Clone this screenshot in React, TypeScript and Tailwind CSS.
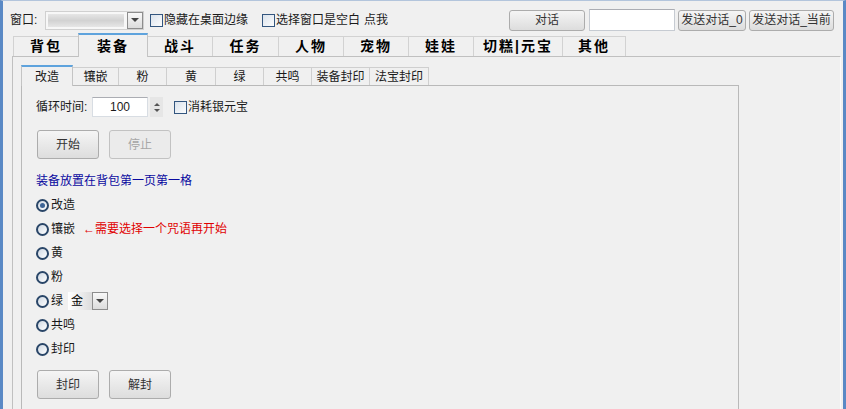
import React from 'react';

const FONT = "font-['Liberation_Sans','Noto_Sans_CJK_SC',sans-serif]";

const mainTabs = [
  { label: '背包', w: 'w-[66px]' },
  { label: '装备', w: 'w-[70px]', active: true },
  { label: '战斗', w: 'w-[66px]' },
  { label: '任务', w: 'w-[67px]' },
  { label: '人物', w: 'w-[66px]' },
  { label: '宠物', w: 'w-[66px]' },
  { label: '娃娃', w: 'w-[66px]' },
  { label: '切糕|元宝', w: 'w-[90px]' },
  { label: '其他', w: 'w-[64px]' },
];

const subTabs = [
  { label: '改造', w: 'w-[52px]', active: true },
  { label: '镶嵌', w: 'w-[47px]' },
  { label: '粉', w: 'w-[49px]' },
  { label: '黄', w: 'w-[50px]' },
  { label: '绿', w: 'w-[49px]' },
  { label: '共鸣', w: 'w-[49px]' },
  { label: '装备封印', w: 'w-[59px]' },
  { label: '法宝封印', w: 'w-[60px]' },
];

function Btn({ w, h, children, disabled }: { w: string; h: string; children: React.ReactNode; disabled?: boolean }) {
  return (
    <button
      className={`${w} ${h} shrink-0 flex items-center justify-center rounded-[3px] border text-[12px] leading-none ${
        disabled
          ? 'border-[#c2c2c2] text-[#a6a6a6] bg-[#ebebeb]'
          : 'border-[#acacac] text-[#333] bg-linear-to-b from-[#f5f5f5] to-[#dddddd]'
      }`}
    >
      {children}
    </button>
  );
}

function Check() {
  return <span className="w-[13px] h-[13px] shrink-0 border border-[#33567f] bg-linear-to-br from-[#dbe3ec] to-[#fbfcfd]" />;
}

function Radio({ checked }: { checked?: boolean }) {
  return (
    <span className="w-[13px] h-[13px] shrink-0 rounded-full border-2 border-[#2a4668] bg-linear-to-br from-[#cfd8e3] to-white flex items-center justify-center">
      {checked && <span className="w-[5px] h-[5px] rounded-full bg-[#3d6496]" />}
    </span>
  );
}

function DropBtn() {
  return (
    <span className="w-[16px] h-full shrink-0 border border-[#8d8d8d] bg-linear-to-b from-[#f8f8f8] to-[#dcdcdc] flex items-center justify-center">
      <span className="w-0 h-0 border-l-[4px] border-r-[4px] border-t-[4px] border-l-transparent border-r-transparent border-t-[#444]" />
    </span>
  );
}

export default function App() {
  return (
    <div
      className={`w-[846px] h-[409px] overflow-hidden bg-[#f0f0f0] border-l-[3px] border-r-[3px] border-t border-[#5a89c5] border-t-[#b3c5dc] flex flex-col text-[12px] text-[#1a1a1a] ${FONT}`}
    >
      {/* top bar */}
      <div className="flex items-center h-[22px] mt-[8px] pl-[7px] pr-[9px]">
        <div className="flex items-center flex-1">
          <span className="w-[35px]">窗口:</span>
          <div className="w-[99px] h-[19px] flex items-stretch border border-[#d0d0d0] bg-[#f7f7f7]">
            <div className="flex-1 flex items-center px-[2px]">
              <div className="w-[76px] h-[13px] bg-linear-to-b from-[#e6e6e6] via-[#d2d2d2] to-[#e6e6e6]" />
            </div>
            <DropBtn />
          </div>
          <span className="ml-[6px] flex items-center">
            <Check />
            <span className="ml-px">隐藏在桌面边缘</span>
          </span>
          <span className="ml-[14px] flex items-center">
            <Check />
            <span className="ml-px">选择窗口是空白</span>
            <span className="ml-[4px]">点我</span>
          </span>
        </div>
        <div className="flex items-center">
          <Btn w="w-[76px]" h="h-[21px]">对话</Btn>
          <div className="ml-[4px] w-[86px] h-[22px] bg-white border border-[#c6cbd2] border-t-[#abadb3]" />
          <Btn w="w-[68px] ml-[3px]" h="h-[21px]">发送对话_0</Btn>
          <Btn w="w-[85px] ml-[3px]" h="h-[21px]">发送对话_当前</Btn>
        </div>
      </div>

      {/* main tabs */}
      <div className="flex items-end h-[23px] mt-[2px] ml-[11px]">
        {mainTabs.map((t) =>
          t.active ? (
            <div
              key={t.label}
              className={`${t.w} h-[24px] -mb-px -ml-px relative z-10 flex items-center justify-center border-x border-[#c4c4c4] border-t-2 border-t-[#5ea3dd] bg-[#f0f0f0] font-bold text-[14px] tracking-[2px] text-black`}
            >
              {t.label}
            </div>
          ) : (
            <div
              key={t.label}
              className={`${t.w} h-[20px] -ml-px flex items-center justify-center border border-b-0 border-[#d2d2d2] bg-[#f0f0f0] font-bold text-[14px] tracking-[2px] text-black`}
            >
              {t.label}
            </div>
          )
        )}
      </div>

      <div className="flex-1 ml-[9px] mr-[2px] border-t border-l border-[#c0c0c0] border-r border-r-[#fbfbfb] flex flex-col">
        {/* sub tabs */}
        <div className="flex items-end h-[20px] mt-[8px] ml-[9px]">
          {subTabs.map((t) =>
            t.active ? (
              <div
                key={t.label}
                className={`${t.w} h-[21px] -mb-px -ml-px relative z-10 flex items-center justify-center border-x border-[#c4c4c4] border-t-2 border-t-[#5ea3dd] bg-[#f0f0f0]`}
              >
                {t.label}
              </div>
            ) : (
              <div
                key={t.label}
                className={`${t.w} h-[18px] -ml-px flex items-center justify-center border border-b-0 border-[#cfcfcf] bg-[#f0f0f0]`}
              >
                {t.label}
              </div>
            )
          )}
        </div>

        <div className="flex-1 w-[718px] ml-[8px] border-t border-l border-r border-[#b9b9b9] pl-[14px] pt-[11px] flex flex-col">
          <div className="flex items-center h-[20px]">
            <span className="w-[56px]">循环时间:</span>
            <div className="w-[56px] h-[20px] bg-white border border-[#d8dde3] border-t-[#abadb3] flex items-center justify-center">
              100
            </div>
            <div className="ml-[2px] w-[13px] h-[20px] flex flex-col items-center justify-center gap-[3px] bg-[#e6e6e6]">
              <span className="w-0 h-0 border-l-[3px] border-r-[3px] border-b-[3px] border-l-transparent border-r-transparent border-b-[#555]" />
              <span className="w-0 h-0 border-l-[3px] border-r-[3px] border-t-[3px] border-l-transparent border-r-transparent border-t-[#555]" />
            </div>
            <span className="ml-[11px] flex items-center">
              <Check />
              <span className="ml-px">消耗银元宝</span>
            </span>
          </div>

          <div className="flex gap-[10px] mt-[13px] ml-px">
            <Btn w="w-[62px]" h="h-[29px]">开始</Btn>
            <Btn w="w-[62px]" h="h-[29px]" disabled>停止</Btn>
          </div>

          <div className="mt-[14px] h-[16px] leading-[16px] text-[#0a0aa0]">装备放置在背包第一页第一格</div>

          <div className="mt-[4px] flex flex-col">
            <div className="h-[24px] flex items-center">
              <Radio checked />
              <span className="ml-[2px]">改造</span>
            </div>
            <div className="h-[24px] flex items-center">
              <Radio />
              <span className="ml-[2px]">镶嵌</span>
              <span className="ml-[8px] text-[#e00000]">←需要选择一个咒语再开始</span>
            </div>
            <div className="h-[24px] flex items-center">
              <Radio />
              <span className="ml-[2px]">黄</span>
            </div>
            <div className="h-[24px] flex items-center">
              <Radio />
              <span className="ml-[2px]">粉</span>
            </div>
            <div className="h-[24px] flex items-center">
              <Radio />
              <span className="ml-[2px]">绿</span>
              <div className="ml-[5px] w-[40px] h-[18px] flex items-stretch">
                <div className="flex-1 flex items-center pl-[3px] bg-linear-to-r from-white to-[#dcdcdc] text-black">金</div>
                <DropBtn />
              </div>
            </div>
            <div className="h-[24px] flex items-center">
              <Radio />
              <span className="ml-[2px]">共鸣</span>
            </div>
            <div className="h-[24px] flex items-center">
              <Radio />
              <span className="ml-[2px]">封印</span>
            </div>
          </div>

          <div className="flex gap-[10px] mt-[9px] ml-px">
            <Btn w="w-[62px]" h="h-[29px]">封印</Btn>
            <Btn w="w-[62px]" h="h-[29px]">解封</Btn>
          </div>
        </div>
      </div>
    </div>
  );
}
